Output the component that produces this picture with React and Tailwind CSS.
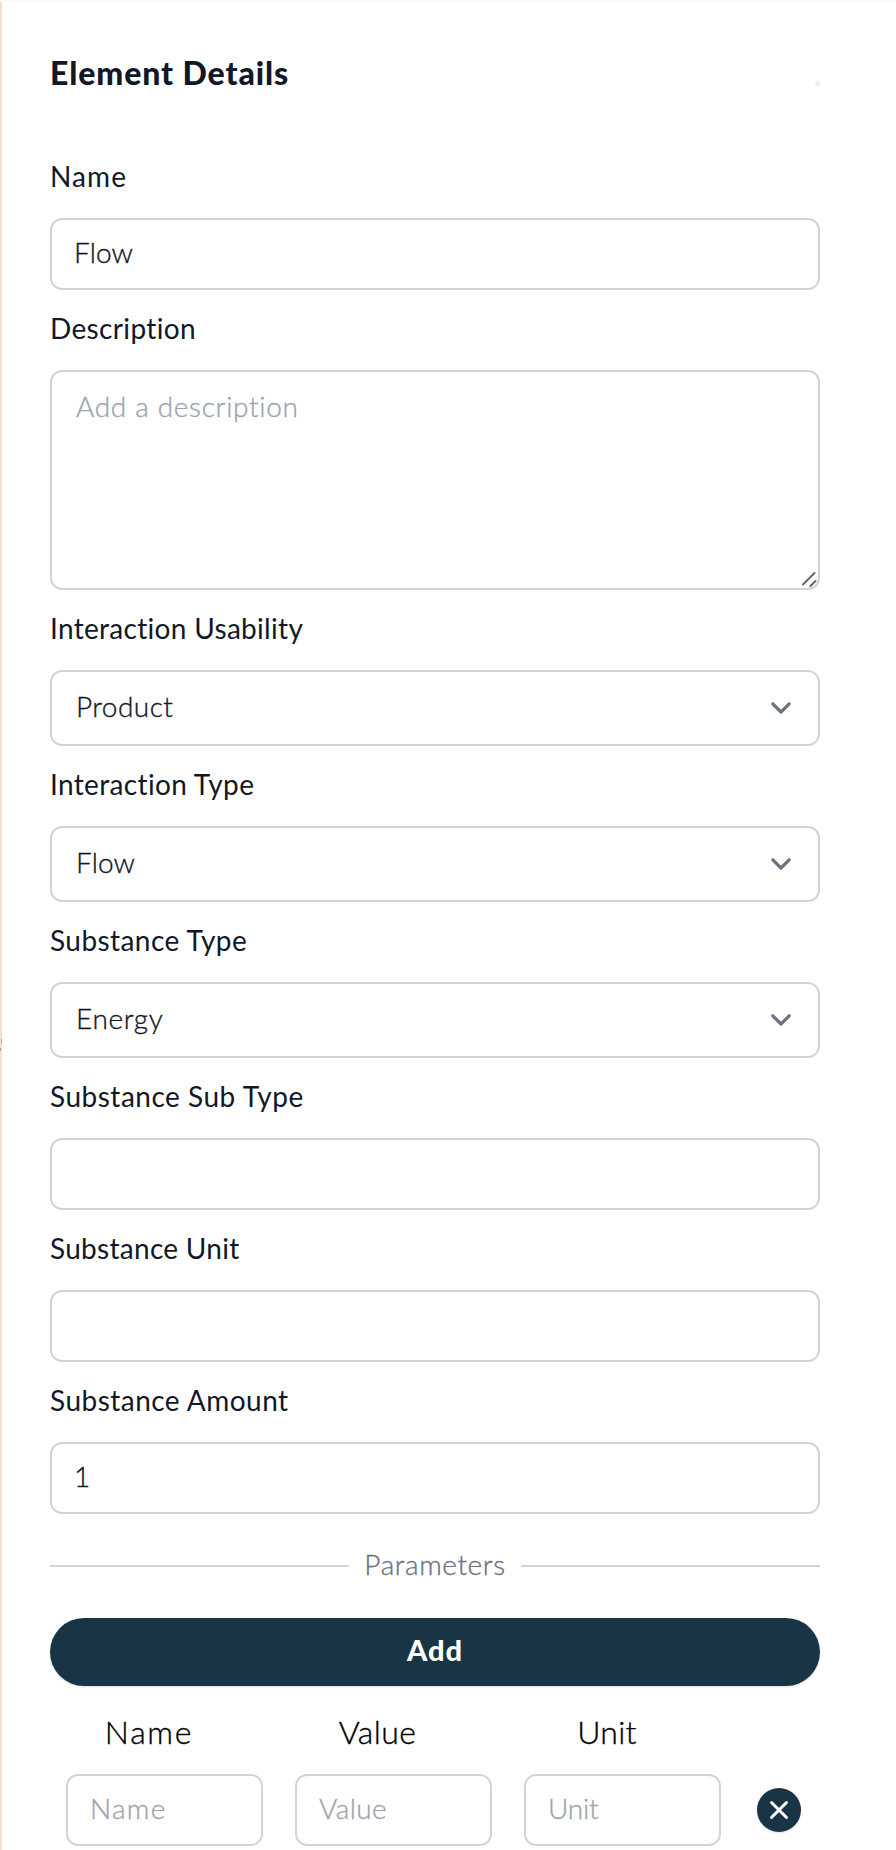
const bookWeight = 'font-light [-webkit-text-stroke:0.35px_currentColor]';

const fieldBox =
  'flex w-full items-center rounded-[12px] border-2 border-[#d1d5db] bg-white text-[28px] leading-[40px] font-light [-webkit-text-stroke:0.35px_currentColor]';

function Field({ label, tracking, children }) {
  return (
    <div className="flex flex-col">
      <label className={`flex h-20 items-center pb-[4px] text-[28px] leading-[40px] whitespace-nowrap ${tracking}`}>
        {label}
      </label>
      {children}
    </div>
  );
}

function TextInput({ value = '', placeholder, tracking = '' }) {
  return (
    <input
      className={`${fieldBox} h-[72px] min-w-0 pb-[5px] pl-[22px] outline-none placeholder:text-[#9ca3af] ${tracking}`}
      defaultValue={value}
      placeholder={placeholder}
    />
  );
}

function SelectBox({ value, tracking }) {
  return (
    <button type="button" className={`${fieldBox} h-[76px] justify-between pr-[25px] pl-6 text-left`}>
      <span className={`pb-[4px] ${tracking}`}>{value}</span>
      <svg className="size-6" viewBox="0 0 24 24" fill="none" stroke="#6b7280" strokeWidth="3.2" strokeLinecap="round" strokeLinejoin="round">
        <path d="M3.8 7.8l8.2 8.2 8.2-8.2" />
      </svg>
    </button>
  );
}

function Rule() {
  return <div className="mt-[4px] h-[2px] flex-1 bg-[#d1d5db]" />;
}

export default function App() {
  return (
    <div className="relative flex h-[1850px] w-[896px] flex-col overflow-hidden border-t-2 border-[#fbfbfc] bg-white font-['Lato',sans-serif] text-[#111827]">
      <span className="absolute top-[1037px] left-px h-[5px] w-px bg-[#b9b0a4]" />
      <span className="absolute top-[1046px] left-0 h-[3px] w-px bg-[#a39b90]" />
      <div className="flex-1 border-l-2 border-[#f0e1cf] pr-[76px] pl-12">
        <header className="flex h-[136px] items-start justify-between pt-[51px]">
          <h1 className="text-[32px] leading-[40px] font-black tracking-[0.9px]">Element Details</h1>
          <span className="mt-7 size-[5px] rounded-full bg-gray-200 blur-[1px]" />
        </header>

        <Field label="Name" tracking="tracking-[1.1px]">
          <TextInput value="Flow" tracking="tracking-[0.1px]" />
        </Field>
        <Field label="Description" tracking="tracking-[0.36px]">
          <div className="relative h-[220px]">
            <textarea
              className={`block h-full w-full resize-none rounded-[12px] border-2 border-[#d1d5db] pt-[14px] pl-6 text-[28px] leading-[40px] tracking-[0.68px] outline-none placeholder:text-[#9ca3af] ${bookWeight}`}
              placeholder="Add a description"
            />
            <svg className="absolute right-[3px] bottom-[3px] size-4" viewBox="0 0 16 16" fill="none" stroke="#666" strokeWidth="2" strokeLinecap="round">
              <path d="M2 13.5L13.5 2M9.5 15L14.5 10" />
            </svg>
          </div>
        </Field>
        <Field label="Interaction Usability" tracking="tracking-[0.31px]">
          <SelectBox value="Product" tracking="tracking-[0.44px]" />
        </Field>
        <Field label="Interaction Type" tracking="tracking-[0.35px]">
          <SelectBox value="Flow" tracking="tracking-[0.1px]" />
        </Field>
        <Field label="Substance Type" tracking="tracking-[0.43px]">
          <SelectBox value="Energy" tracking="tracking-[0.65px]" />
        </Field>
        <Field label="Substance Sub Type" tracking="tracking-[0.51px]">
          <TextInput />
        </Field>
        <Field label="Substance Unit" tracking="tracking-[0.29px]">
          <TextInput />
        </Field>
        <Field label="Substance Amount" tracking="tracking-[0.48px]">
          <TextInput value="1" />
        </Field>

        <div className="flex h-[104px] items-center gap-[15px] pb-[4px]">
          <Rule />
          <span className={`text-[28px] leading-[40px] tracking-[0.6px] text-[#6b7280] ${bookWeight}`}>Parameters</span>
          <Rule />
        </div>

        <button type="button" className="flex h-[68px] w-full items-center justify-center rounded-full bg-[#183445] pb-[4px] text-[29px] leading-[40px] font-black tracking-[1px] text-white shadow-sm">
          Add
        </button>

        <div className="grid grid-cols-[229px_229px_229px_83px]">
          <div className={`flex h-[88px] items-center justify-center pt-[4px] pr-[31px] text-[32px] tracking-[1.7px] text-black ${bookWeight}`}>Name</div>
          <div className={`flex h-[88px] items-center justify-center pt-[4px] pr-[32px] text-[32px] tracking-[0.4px] text-black ${bookWeight}`}>Value</div>
          <div className={`flex h-[88px] items-center justify-center pt-[4px] pr-[31px] text-[32px] tracking-[0.3px] text-black ${bookWeight}`}>Unit</div>
          <div />
          <div className="px-4"><TextInput placeholder="Name" tracking="tracking-[1.3px]" /></div>
          <div className="px-4"><TextInput placeholder="Value" tracking="tracking-[0.4px]" /></div>
          <div className="px-4"><TextInput placeholder="Unit" tracking="tracking-[-0.2px]" /></div>
          <div className="flex items-center justify-center">
            <button type="button" className="flex size-11 items-center justify-center rounded-full bg-[#183445] shadow-sm">
              <svg className="size-6" viewBox="0 0 24 24" fill="none" stroke="#fff" strokeWidth="3" strokeLinecap="round">
                <path d="M4.5 4.5l15 15M19.5 4.5l-15 15" />
              </svg>
            </button>
          </div>
        </div>
      </div>
    </div>
  );
}
